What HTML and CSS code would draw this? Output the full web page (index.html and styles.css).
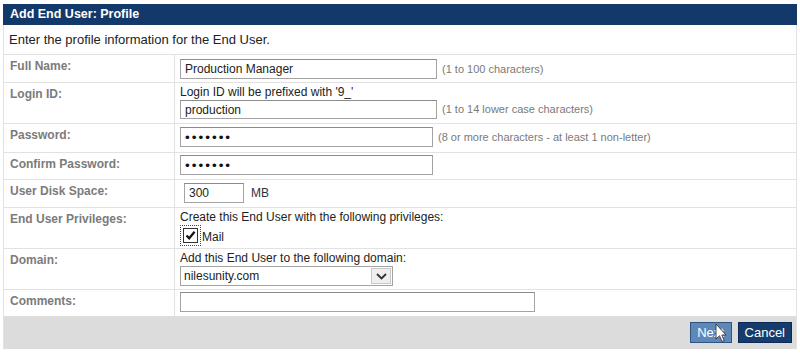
FILE: index.html
```html
<!DOCTYPE html>
<html lang="en">
<head>
    <meta charset="UTF-8">
    <title>Add End User - Profile</title>
    <link rel="stylesheet" href="styles.css">
</head>
<body>
    <div class="panel">
        <div class="panel-title">Add End User: Profile</div>
        <div class="panel-intro">Enter the profile information for the End User.</div>

        <div class="form-row row-name">
            <div class="form-label">Full Name:</div>
            <div class="form-value">
                <input type="text" class="field field-long" value="Production Manager">
                <span class="hint">(1 to 100 characters)</span>
            </div>
        </div>

        <div class="form-row row-login">
            <div class="form-label">Login ID:</div>
            <div class="form-value">
                <div class="note">Login ID will be prefixed with '9_'</div>
                <input type="text" class="field field-long" value="production">
                <span class="hint">(1 to 14 lower case characters)</span>
            </div>
        </div>

        <div class="form-row row-password">
            <div class="form-label">Password:</div>
            <div class="form-value">
                <input type="password" class="field field-pass" value="secret1">
                <span class="hint">(8 or more characters - at least 1 non-letter)</span>
            </div>
        </div>

        <div class="form-row row-confirm">
            <div class="form-label">Confirm Password:</div>
            <div class="form-value">
                <input type="password" class="field field-pass" value="secret1">
            </div>
        </div>

        <div class="form-row row-disk">
            <div class="form-label">User Disk Space:</div>
            <div class="form-value">
                <input type="text" class="field field-disk" value="300">
                <span class="unit">MB</span>
            </div>
        </div>

        <div class="form-row row-priv">
            <div class="form-label">End User Privileges:</div>
            <div class="form-value">
                <div class="note">Create this End User with the following privileges:</div>
                <label class="check">
                    <span class="check-focus">
                        <span class="check-box">
                            <svg width="13" height="13" viewBox="0 0 13 13"><path d="M2.5 6.5 L5.2 9.3 L10.6 2.8" fill="none" stroke="#111" stroke-width="2.2"/></svg>
                        </span>
                    </span>
                    <span class="check-text">Mail</span>
                </label>
            </div>
        </div>

        <div class="form-row row-domain">
            <div class="form-label">Domain:</div>
            <div class="form-value">
                <div class="note">Add this End User to the following domain:</div>
                <div class="select">
                    <span class="select-value">nilesunity.com</span>
                    <span class="select-arrow">
                        <svg width="11" height="7" viewBox="0 0 11 7"><path d="M1 1 L5.5 5.5 L10 1" fill="none" stroke="#333" stroke-width="1.8"/></svg>
                    </span>
                </div>
            </div>
        </div>

        <div class="form-row row-comments">
            <div class="form-label">Comments:</div>
            <div class="form-value">
                <input type="text" class="field field-comments" value="">
            </div>
        </div>

        <div class="panel-footer">
            <button type="button" class="btn btn-hover">Next</button>
            <button type="button" class="btn">Cancel</button>
            <!-- mouse pointer caught in the screenshot -->
            <svg class="pointer" width="13" height="21" viewBox="0 0 13 21"><path d="M1 1 L1 16 L4.5 12.8 L7 18.5 L9.2 17.6 L6.8 12 L11 12 Z" fill="#fff" stroke="#333" stroke-width="0.9" stroke-linejoin="round"/></svg>
        </div>
    </div>
</body>
</html>
```

FILE: styles.css
```css
body {
    margin: 0;
    font-family: "Liberation Sans", Arial, sans-serif;
    background-color: #ffffff;
    color: #222222;
}
.panel {
    width: 794px;
    margin: 4px 0 0 3px;
    box-sizing: border-box;
    border-left: 1px solid #e2e2e2;
    border-right: 1px solid #e2e2e2;
}
.panel-title {
    height: 21px;
    margin: 0 -1px;
    padding-left: 7px;
    background-color: #13396a;
    color: #ffffff;
    font-size: 12.5px;
    font-weight: bold;
    line-height: 21px;
}
.panel-intro {
    height: 29px;
    padding-left: 5px;
    font-size: 13px;
    line-height: 29px;
    color: #222222;
}
.form-row {
    display: grid;
    grid-template-columns: 171px 1fr;
    box-sizing: border-box;
    border-top: 1px solid #e2e2e2;
}
.form-label {
    padding: 4px 0 0 6px;
    border-right: 1px solid #e2e2e2;
    font-size: 12px;
    font-weight: bold;
    line-height: 15px;
    color: #7b7b7b;
}
.form-value {
    display: flex;
    flex-wrap: wrap;
    align-items: center;
    align-content: flex-start;
    padding: 3px 0 0 5px;
    font-size: 12px;
    line-height: 15px;
}
.row-name { height: 28px; }
.row-name .form-value { padding-top: 4px; }
.row-login { height: 41px; }
.row-login .form-value { padding-top: 2px; }
.row-password { height: 29px; }
.row-confirm { height: 27px; }
.row-confirm .form-value { padding-top: 2px; }
.row-disk { height: 28px; }
.row-priv { height: 41px; }
.row-priv .form-value { padding-top: 2px; }
.row-domain { height: 41px; }
.row-domain .form-value { padding-top: 2px; }
.row-comments { height: 27px; }
.row-comments .form-value { padding-top: 2px; }

.note {
    width: 100%;
    font-size: 12px;
    line-height: 15px;
    color: #222222;
}
.field {
    height: 20px;
    box-sizing: border-box;
    margin: 0;
    padding: 0 4px;
    border: 1px solid #a3a3a3;
    border-top-color: #8c8c8c;
    font-family: "Liberation Sans", Arial, sans-serif;
    font-size: 12px;
    color: #222222;
    outline: none;
}
.row-login .field { height: 19px; }
.field-long { width: 257px; }
.field-pass {
    width: 253px;
    font-size: 13.5px;
    letter-spacing: 2px;
    color: #111111;
}
.field-disk {
    width: 60px;
    margin-left: 4px;
}
.field-comments { width: 355px; }
.hint {
    margin-left: 5px;
    font-size: 11px;
    color: #7a7a7a;
}
.unit {
    margin-left: 7px;
    font-size: 12px;
    color: #333333;
}
.check {
    display: flex;
    align-items: center;
    margin-top: 0;
}
.check-focus {
    display: inline-block;
    padding: 2px;
    border: 1px dotted #444444;
}
.check-box {
    display: block;
    width: 13px;
    height: 13px;
    border: 1px solid #333333;
    background-color: #ffffff;
}
.check-box svg {
    display: block;
}
.check-text {
    margin-left: 1px;
    margin-top: 4px;
    font-size: 12px;
    color: #222222;
}
.select {
    display: flex;
    width: 213px;
    height: 20px;
    box-sizing: border-box;
    border: 1px solid #a3a3a3;
    background-color: #ffffff;
}
.select-value {
    flex: 1;
    padding-left: 3px;
    font-size: 12px;
    line-height: 18px;
    color: #222222;
}
.select-arrow {
    display: flex;
    align-items: center;
    justify-content: center;
    width: 18px;
    margin: 1px;
    border: 1px solid #c8c8c8;
    background-color: #efefef;
}
.panel-footer {
    position: relative;
    display: flex;
    justify-content: flex-end;
    align-items: center;
    gap: 6px;
    height: 33px;
    padding-right: 4px;
    background-color: #dcdcdc;
}
.btn {
    height: 21px;
    padding: 0 6px;
    border: 1px solid #0c2a55;
    background-color: #163c6e;
    color: #ffffff;
    font-family: "Liberation Sans", Arial, sans-serif;
    font-size: 13px;
    cursor: pointer;
}
.btn-hover {
    width: 42px;
    background-color: #5f88b9;
    border-color: #2e5484;
}
.pointer {
    position: absolute;
    left: 711px;
    top: 7px;
}
```
